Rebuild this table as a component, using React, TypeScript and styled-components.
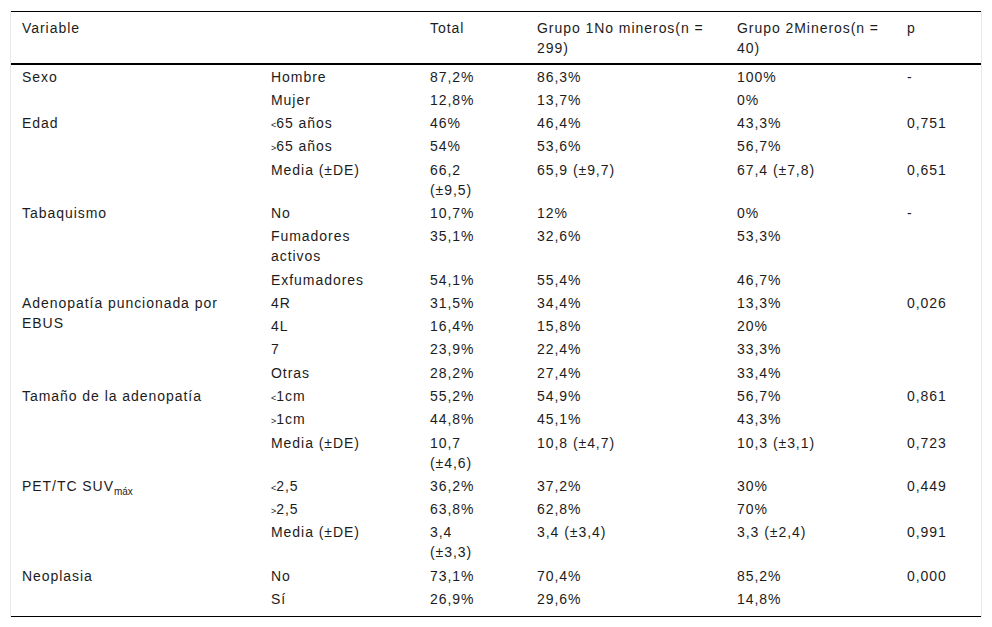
import React from "react"
import styled, { createGlobalStyle } from "styled-components"

const GlobalStyle = createGlobalStyle`
  html, body {
    margin: 0;
    padding: 0;
    background: #fff;
  }
`

const Frame = styled.div`
  margin: 11px 0 0 10px;
  width: 970px;
  border-left: 1px solid #e8e8e8;
  border-right: 1px solid #e8e8e8;
  font-family: "Liberation Sans", Arial, sans-serif;
  font-size: 14px;
  letter-spacing: 0.95px;
  color: #1c1c1c;
`

const Table = styled.table`
  width: 100%;
  border-collapse: collapse;
  table-layout: fixed;
  border-top: 1px solid #000;
  border-bottom: 1px solid #000;
`

const Col = styled.col<{ $w: number }>`
  width: ${p => p.$w}px;
`

const HeadCell = styled.th<{ $pr?: number }>`
  text-align: left;
  font-weight: normal;
  vertical-align: top;
  line-height: 20px;
  padding: 6px ${p => p.$pr ?? 20}px 5px 11px;
  border-bottom: 2px solid #000;
`

const Cell = styled.td<{ $last?: boolean; $pr?: number }>`
  vertical-align: top;
  line-height: 20px;
  padding: 1.65px ${p => p.$pr ?? 20}px ${p => (p.$last ? "7px" : "1.65px")} 11px;
`

const Sym = styled.span`
  font-size: 9px;
  letter-spacing: 0;
  line-height: 0;
`

const Sub = styled.sub`
  font-size: 10px;
  letter-spacing: 0;
  vertical-align: -4px;
  line-height: 0;
`

type Row = { label: React.ReactNode; total: string; g1: string; g2: string; p?: string }
type Group = { name: React.ReactNode; rows: Row[] }

const lt = (t: string) => (<><Sym>&lt;</Sym>{t}</>)
const gt = (t: string) => (<><Sym>&gt;</Sym>{t}</>)

// column widths and right padding, tuned so wrapping matches
const widths = [249, 159, 107, 200, 170, 85]
const pads = [20, 20, 30, 20, 12, 20]

const groups: Group[] = [
  {
    name: "Sexo",
    rows: [
      { label: "Hombre", total: "87,2%", g1: "86,3%", g2: "100%", p: "-" },
      { label: "Mujer", total: "12,8%", g1: "13,7%", g2: "0%" },
    ],
  },
  {
    name: "Edad",
    rows: [
      { label: lt("65 años"), total: "46%", g1: "46,4%", g2: "43,3%", p: "0,751" },
      { label: gt("65 años"), total: "54%", g1: "53,6%", g2: "56,7%" },
      { label: "Media (±DE)", total: "66,2 (±9,5)", g1: "65,9 (±9,7)", g2: "67,4 (±7,8)", p: "0,651" },
    ],
  },
  {
    name: "Tabaquismo",
    rows: [
      { label: "No", total: "10,7%", g1: "12%", g2: "0%", p: "-" },
      { label: "Fumadores activos", total: "35,1%", g1: "32,6%", g2: "53,3%" },
      { label: "Exfumadores", total: "54,1%", g1: "55,4%", g2: "46,7%" },
    ],
  },
  {
    name: "Adenopatía puncionada por EBUS",
    rows: [
      { label: "4R", total: "31,5%", g1: "34,4%", g2: "13,3%", p: "0,026" },
      { label: "4L", total: "16,4%", g1: "15,8%", g2: "20%" },
      { label: "7", total: "23,9%", g1: "22,4%", g2: "33,3%" },
      { label: "Otras", total: "28,2%", g1: "27,4%", g2: "33,4%" },
    ],
  },
  {
    name: "Tamaño de la adenopatía",
    rows: [
      { label: lt("1cm"), total: "55,2%", g1: "54,9%", g2: "56,7%", p: "0,861" },
      { label: gt("1cm"), total: "44,8%", g1: "45,1%", g2: "43,3%" },
      { label: "Media (±DE)", total: "10,7 (±4,6)", g1: "10,8 (±4,7)", g2: "10,3 (±3,1)", p: "0,723" },
    ],
  },
  {
    name: <>PET/TC SUV<Sub>máx</Sub></>,
    rows: [
      { label: lt("2,5"), total: "36,2%", g1: "37,2%", g2: "30%", p: "0,449" },
      { label: gt("2,5"), total: "63,8%", g1: "62,8%", g2: "70%" },
      { label: "Media (±DE)", total: "3,4 (±3,3)", g1: "3,4 (±3,4)", g2: "3,3 (±2,4)", p: "0,991" },
    ],
  },
  {
    name: "Neoplasia",
    rows: [
      { label: "No", total: "73,1%", g1: "70,4%", g2: "85,2%", p: "0,000" },
      { label: "Sí", total: "26,9%", g1: "29,6%", g2: "14,8%" },
    ],
  },
]

const headers = ["Variable", "", "Total", "Grupo 1No mineros(n = 299)", "Grupo 2Mineros(n = 40)", "p"]

export default function App() {
  return (
    <>
      <GlobalStyle />
      <Frame>
        <Table>
          <colgroup>
            {widths.map((w, i) => (
              <Col key={i} $w={w} />
            ))}
          </colgroup>
          <thead>
            <tr>
              {headers.map((h, i) => (
                <HeadCell key={i} $pr={pads[i]}>{h}</HeadCell>
              ))}
            </tr>
          </thead>
          <tbody>
            {groups.map((g, gi) =>
              g.rows.map((r, ri) => {
                const last = gi === groups.length - 1 && ri === g.rows.length - 1
                const cells = [r.label, r.total, r.g1, r.g2, r.p ?? ""]
                return (
                  <tr key={`${gi}-${ri}`}>
                    {ri === 0 && (
                      <Cell rowSpan={g.rows.length} $last={gi === groups.length - 1} $pr={pads[0]}>
                        {g.name}
                      </Cell>
                    )}
                    {cells.map((c, ci) => (
                      <Cell key={ci} $last={last} $pr={pads[ci + 1]}>{c}</Cell>
                    ))}
                  </tr>
                )
              })
            )}
          </tbody>
        </Table>
      </Frame>
    </>
  )
}
